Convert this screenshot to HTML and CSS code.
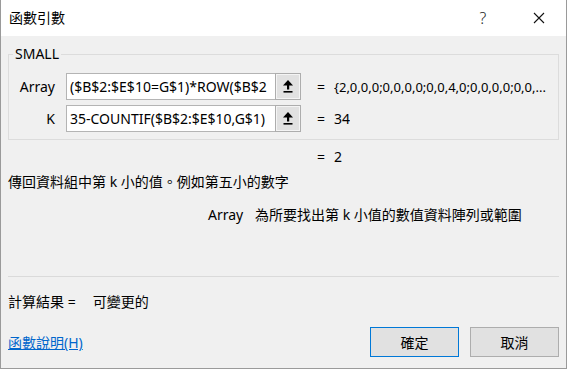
FILE: index.html
```html
<!DOCTYPE html>
<html lang="zh-Hant">
<head>
    <meta charset="UTF-8">
    <meta name="viewport" content="width=device-width, initial-scale=1.0">
    <title>函數引數</title>
    <link rel="stylesheet" href="styles.css">
</head>
<body>
    <div class="dialog">
        <div class="titlebar">
            <span class="title">函數引數</span>
            <div class="title-btns">
                <span class="help-btn">?</span>
                <span class="close-btn">
                    <svg width="12" height="12" viewBox="0 0 12 12"><path d="M1 1 L11 11 M11 1 L1 11" stroke="#111" stroke-width="1.1" fill="none"/></svg>
                </span>
            </div>
        </div>

        <div class="content">
            <fieldset class="func-group">
                <legend>SMALL</legend>
                <div class="arg-row">
                    <span class="arg-label">Array</span>
                    <div class="ref-box">
                        <div class="ref-input">($B$2:$E$10=G$1)*ROW($B$2</div>
                        <span class="ref-btn">
                            <svg width="10" height="13" viewBox="0 0 10 13"><polygon points="0,5.5 5,0 10,5.5" fill="#000"/><rect x="4" y="4.5" width="2.2" height="5" fill="#000"/><rect x="0.5" y="11" width="9" height="1.6" fill="#000"/></svg>
                        </span>
                    </div>
                    <span class="eq">=</span>
                    <span class="arg-value arg-value-long">{2,0,0,0;0,0,0,0;0,0,4,0;0,0,0,0;0,0,...</span>
                </div>
                <div class="arg-row">
                    <span class="arg-label">K</span>
                    <div class="ref-box">
                        <div class="ref-input">35-COUNTIF($B$2:$E$10,G$1)</div>
                        <span class="ref-btn">
                            <svg width="10" height="13" viewBox="0 0 10 13"><polygon points="0,5.5 5,0 10,5.5" fill="#000"/><rect x="4" y="4.5" width="2.2" height="5" fill="#000"/><rect x="0.5" y="11" width="9" height="1.6" fill="#000"/></svg>
                        </span>
                    </div>
                    <span class="eq">=</span>
                    <span class="arg-value">34</span>
                </div>
            </fieldset>

            <div class="func-result"><span class="eq">=</span><span class="arg-value">2</span></div>

            <p class="func-desc">傳回資料組中第 k 小的值。例如第五小的數字</p>
            <p class="arg-desc"><span class="arg-name">Array</span>為所要找出第 k 小值的數值資料陣列或範圍</p>

            <div class="separator"></div>

            <div class="calc-result">計算結果 =<span class="calc-value">可變更的</span></div>

            <div class="footer">
                <a href="#" class="help-link">函數說明(H)</a>
                <div class="actions">
                    <button class="btn btn-default">確定</button>
                    <button class="btn">取消</button>
                </div>
            </div>
        </div>
    </div>
</body>
</html>
```

FILE: styles.css
```css
* {
    box-sizing: border-box;
}
body {
    margin: 0;
    font-family: "Noto Sans", "Noto Sans CJK TC", sans-serif;
    font-size: 14px;
    color: #000;
    background: #f0f0f0;
}
.dialog {
    width: 567px;
    height: 369px;
    display: flex;
    flex-direction: column;
    background-color: #f0f0f0;
    border: 1px solid #9a9a9a;
    border-top: none;
}
.titlebar {
    height: 36px;
    flex-shrink: 0;
    display: flex;
    align-items: center;
    justify-content: space-between;
    background-color: #fff;
    padding-left: 8px;
}
.title {
    line-height: 20px;
}
.title-btns {
    display: flex;
    align-items: center;
    height: 100%;
}
.help-btn {
    width: 46px;
    margin-right: 14px;
    text-align: center;
    font-size: 16px;
    font-weight: 300;
    color: #222;
}
.close-btn {
    width: 46px;
    display: flex;
    justify-content: center;
    padding-right: 8px;
}
.content {
    flex: 1;
    display: flex;
    flex-direction: column;
    padding: 0 7px;
}
.func-group {
    margin: 8px 0 0 0;
    border: 1px solid #dcdcdc;
    padding: 9px 0 7px 0;
    min-width: 0;
}
.func-group legend {
    padding: 0 2px;
    margin-left: 4px;
    line-height: 20px;
}
.arg-row {
    display: flex;
    align-items: center;
    height: 27px;
    margin-bottom: 5px;
}
.arg-row:last-child {
    margin-bottom: 0;
}
.arg-label {
    flex-shrink: 0;
    width: 46px;
    text-align: right;
    margin-right: 11px;
}
.ref-box {
    flex-shrink: 0;
    display: flex;
    height: 27px;
}
.ref-input {
    width: 209px;
    height: 27px;
    background-color: #fff;
    border: 1px solid #b4b4b4;
    border-right: none;
    padding-left: 3px;
    line-height: 25px;
    white-space: nowrap;
    overflow: hidden;
}
.ref-btn {
    width: 26px;
    height: 27px;
    display: flex;
    align-items: center;
    justify-content: center;
    background-color: #e1e1e1;
    border: 1px solid #adadad;
    box-shadow: inset 0 0 0 1px #f4f4f4;
}
.eq {
    flex-shrink: 0;
    width: 17px;
    margin-left: 16px;
}
.arg-value {
    min-width: 0;
    white-space: nowrap;
    overflow: hidden;
}
.arg-value-long {
    font-size: 13px;
}
.func-result {
    display: flex;
    line-height: 20px;
    margin-top: 7px;
    padding-left: 293px;
}
.func-desc {
    margin: 5px 0 0 0;
    line-height: 20px;
}
.arg-desc {
    margin: 13px 0 0 200px;
    line-height: 20px;
}
.arg-name {
    display: inline-block;
    width: 47px;
}
.separator {
    height: 1px;
    background-color: #dadada;
    margin-top: 51px;
}
.calc-result {
    line-height: 20px;
    margin-top: 15px;
}
.calc-value {
    margin-left: 17px;
}
.footer {
    display: flex;
    align-items: center;
    justify-content: space-between;
    margin-top: 15px;
}
.help-link {
    color: #0066cc;
    text-decoration: underline;
}
.actions {
    display: flex;
    gap: 11px;
}
.btn {
    width: 89px;
    height: 30px;
    font-family: inherit;
    font-size: 14px;
    color: #000;
    background-color: #e1e1e1;
    border: 1px solid #adadad;
    padding: 0;
}
.btn-default {
    border-color: #0078d7;
}
```
